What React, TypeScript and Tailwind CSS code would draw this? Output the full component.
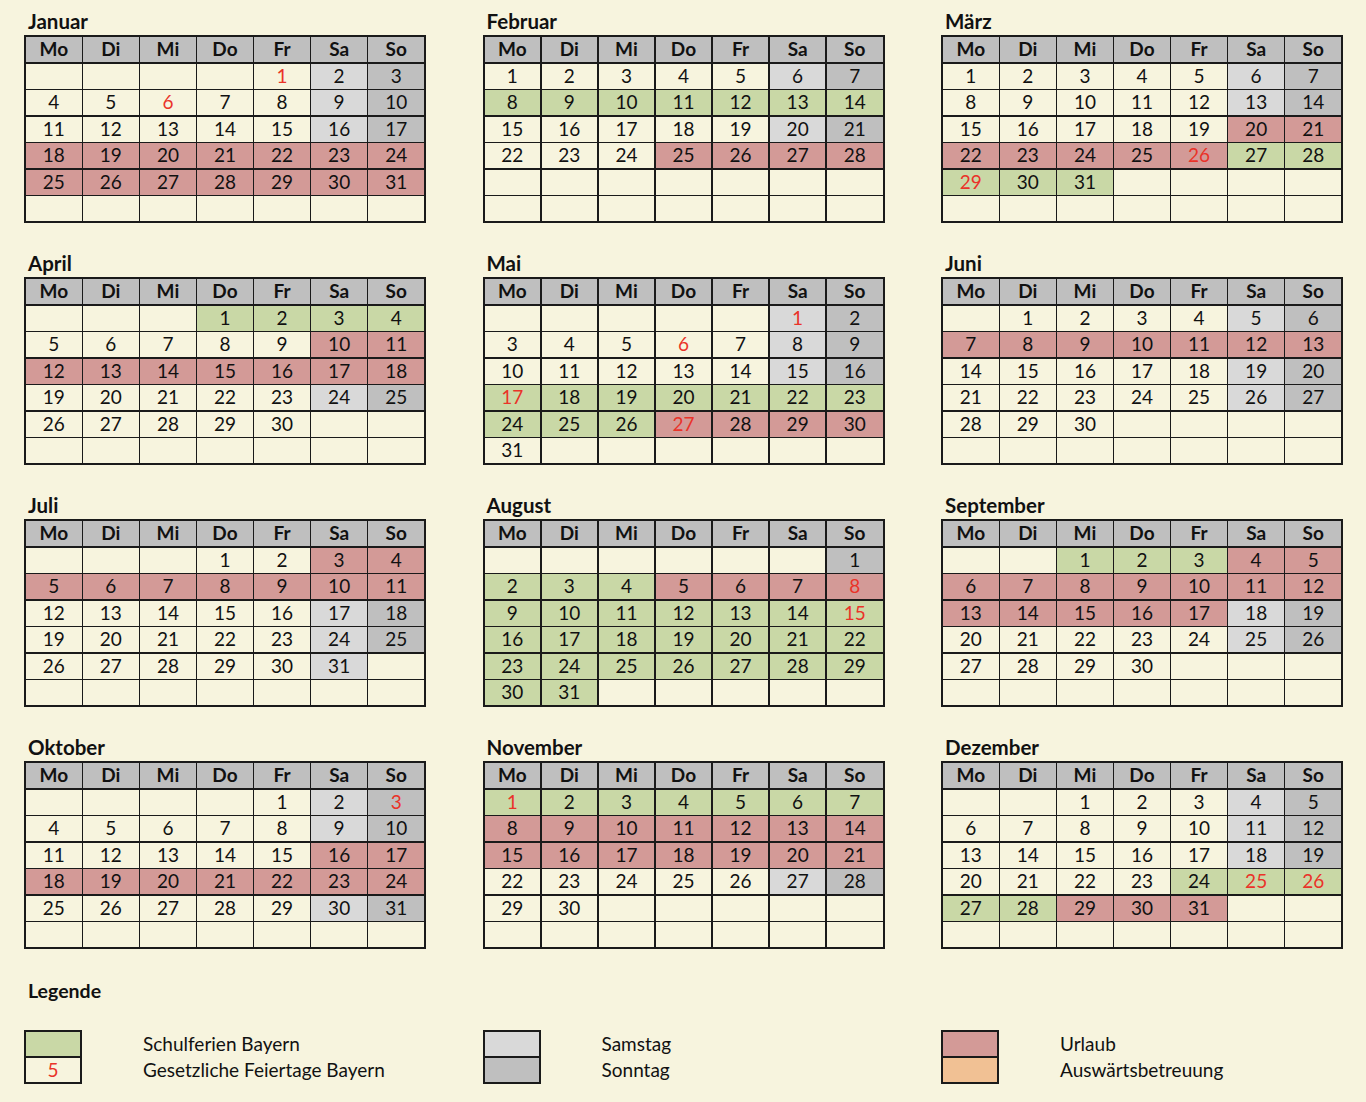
import React from "react";

type C = "W" | "S" | "U" | "G" | "R";

interface MonthDef {
  name: string;
  off: number;
  days: number;
  ranges: [number, number, C][];
  hol: number[];
}

const months: MonthDef[] = [
  { name: "Januar", off: 4, days: 31, ranges: [[18, 31, "R"]], hol: [1, 6] },
  { name: "Februar", off: 0, days: 28, ranges: [[8, 14, "G"], [25, 28, "R"]], hol: [] },
  { name: "März", off: 0, days: 31, ranges: [[20, 26, "R"], [27, 31, "G"]], hol: [26, 29] },
  { name: "April", off: 3, days: 30, ranges: [[1, 4, "G"], [10, 18, "R"]], hol: [] },
  { name: "Mai", off: 5, days: 31, ranges: [[17, 26, "G"], [27, 30, "R"]], hol: [1, 6, 17, 27] },
  { name: "Juni", off: 1, days: 30, ranges: [[7, 13, "R"]], hol: [] },
  { name: "Juli", off: 3, days: 31, ranges: [[3, 11, "R"]], hol: [] },
  { name: "August", off: 6, days: 31, ranges: [[2, 4, "G"], [5, 8, "R"], [9, 31, "G"]], hol: [8, 15] },
  { name: "September", off: 2, days: 30, ranges: [[1, 3, "G"], [4, 17, "R"]], hol: [] },
  { name: "Oktober", off: 4, days: 31, ranges: [[16, 24, "R"]], hol: [3] },
  { name: "November", off: 0, days: 30, ranges: [[1, 7, "G"], [8, 21, "R"]], hol: [1] },
  { name: "Dezember", off: 2, days: 31, ranges: [[24, 28, "G"], [29, 31, "R"]], hol: [25, 26] },
];

const bg: Record<C, string> = {
  W: "bg-[#f7f4de]",
  S: "bg-[#d9d9d9]",
  U: "bg-[#bfbfbf]",
  G: "bg-[#c9d8a6]",
  R: "bg-[#d39a97]",
};

const heads = ["Mo", "Di", "Mi", "Do", "Fr", "Sa", "So"];

function Month({ m }: { m: MonthDef }) {
  const cells: { d: number | null; c: C; h: boolean }[] = [];
  for (let i = 0; i < 42; i++) {
    const d = i - m.off + 1;
    if (d < 1 || d > m.days) {
      cells.push({ d: null, c: "W", h: false });
      continue;
    }
    const wd = i % 7;
    let c: C = wd === 5 ? "S" : wd === 6 ? "U" : "W";
    for (const [a, b, cc] of m.ranges) if (d >= a && d <= b) c = cc;
    cells.push({ d, c, h: m.hol.includes(d) });
  }
  return (
    <div className="flex flex-col">
      <div className="h-[24px] pl-[4px] text-[20.5px] font-bold leading-[21px] text-[#111]">{m.name}</div>
      <div className="grid grid-cols-7 gap-[1.5px] bg-[#1a1a1a] p-[2px]">
        {heads.map((h) => (
          <div key={h} className="flex h-[25px] items-center justify-center bg-[#bfbfbf] text-[19px] font-bold text-[#111]">
            {h}
          </div>
        ))}
        {cells.map((c, i) => (
          <div
            key={i}
            className={`flex h-[25px] items-center justify-center text-[19px] ${bg[c.c]} ${c.h ? "text-[#ea3329]" : "text-[#111]"}`}
          >
            {c.d ?? ""}
          </div>
        ))}
      </div>
    </div>
  );
}

function LegendItem({ top, bottom, topText, bottomText, bottomContent }: { top: string; bottom: string; topText: string; bottomText: string; bottomContent?: React.ReactNode }) {
  return (
    <div className="flex items-start">
      <div className="flex w-[58px] flex-col border-2 border-[#1a1a1a]">
        <div className={`h-[24px] ${top}`} />
        <div className={`flex h-[26px] items-center justify-center border-t-2 border-[#1a1a1a] ${bottom} text-[19px] text-[#ea3329]`}>
          {bottomContent}
        </div>
      </div>
      <div className="ml-[61px] flex flex-col pt-[1px] text-[19px] text-[#111]">
        <div className="h-[26px] leading-[26px]">{topText}</div>
        <div className="h-[26px] leading-[26px]">{bottomText}</div>
      </div>
    </div>
  );
}

export default function App() {
  return (
    <div className="min-h-screen w-full bg-[#f7f4de] pl-[24px] pt-[11px] font-['Lato','Noto_Sans',sans-serif] text-[#111]">
      <div className="grid grid-cols-[402px_402px_402px] gap-x-[56.5px] gap-y-[30px]">
        {months.map((m) => (
          <Month key={m.name} m={m} />
        ))}
      </div>
      <div className="mt-[30px] h-[24px] pl-[4px] text-[19.5px] font-bold leading-[24px]">Legende</div>
      <div className="mt-[27px] grid grid-cols-[402px_402px_402px] gap-x-[56.5px]">
        <LegendItem top="bg-[#c9d8a6]" bottom="bg-[#f7f4de]" topText="Schulferien Bayern" bottomText="Gesetzliche Feiertage Bayern" bottomContent="5" />
        <LegendItem top="bg-[#d9d9d9]" bottom="bg-[#bfbfbf]" topText="Samstag" bottomText="Sonntag" />
        <LegendItem top="bg-[#d39a97]" bottom="bg-[#f1c194]" topText="Urlaub" bottomText="Auswärtsbetreuung" />
      </div>
    </div>
  );
}
